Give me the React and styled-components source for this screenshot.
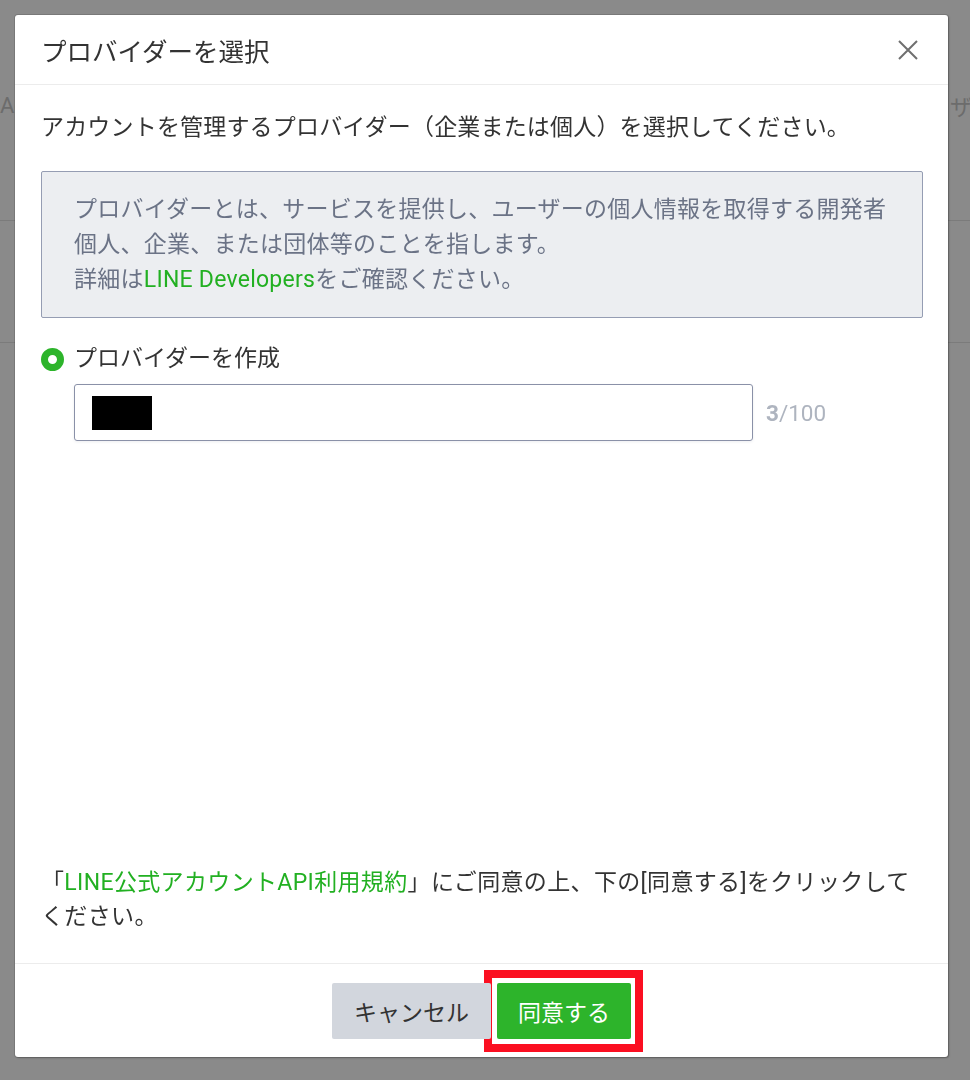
import React from "react"
import styled, { createGlobalStyle } from "styled-components"

const GlobalStyle = createGlobalStyle`
  html, body {
    margin: 0;
    padding: 0;
    background: #8a8a8a;
  }
  body {
    font-family: "Roboto", "Noto Sans CJK JP", sans-serif;
    -webkit-font-smoothing: antialiased;
  }
`

// faint page behind the dim layer
const BackPage = styled.div`
  width: 970px;
  height: 1080px;
  overflow: hidden;
  background: #8a8a8a;
`

const BackRow = styled.div`
  display: grid;
  grid-template-columns: 950px 1fr;
  align-items: center;
  height: ${p => p.$h}px;
  border-bottom: 1px solid #7b7b7b;
  color: #6c6c6c;
  font-size: 22px;
  white-space: nowrap;
  padding-bottom: ${p => p.$pb || 0}px;
  box-sizing: border-box;
`

const Overlay = styled.div`
  position: fixed;
  inset: 0;
  display: flex;
  align-items: flex-start;
  padding: 15px 0 0 15px;
`

const Modal = styled.div`
  width: 933px;
  height: 1042px;
  background: #fff;
  border-radius: 3px;
  box-shadow: 0 0 0 1px rgba(0, 0, 0, 0.12), 1px 1px 2px rgba(0, 0, 0, 0.25);
  display: flex;
  flex-direction: column;
`

const Header = styled.div`
  height: 69px;
  display: flex;
  align-items: center;
  justify-content: space-between;
  padding: 0 28px 0 26px;
  border-bottom: 1px solid #ececec;
`

const Title = styled.h2`
  margin: 0;
  font-size: 25.5px;
  font-weight: 400;
  color: #333;
`

const CloseButton = styled.button`
  border: 0;
  background: none;
  padding: 0;
  width: 24px;
  height: 24px;
  display: flex;
  align-items: center;
  justify-content: center;
  cursor: pointer;
`

const Body = styled.div`
  flex: 1;
  display: flex;
  flex-direction: column;
  padding: 26px 25px 29px 26px;
`

const Lead = styled.p`
  margin: 0 0 26px;
  font-size: 23px;
  line-height: 34px;
  letter-spacing: 0.18px;
  color: #333;
`

const InfoBox = styled.div`
  background: #eceef1;
  border: 1px solid #959db3;
  border-radius: 2px;
  padding: 20px 32px;
  font-size: 23px;
  line-height: 35px;
  letter-spacing: 0.25px;
  color: #6b7386;
`

const Link = styled.a`
  color: #22b022;
  text-decoration: none;
`

const RadioRow = styled.label`
  display: flex;
  align-items: center;
  gap: 10px;
  margin-top: 24px;
  font-size: 23px;
  line-height: 34px;
  color: #333;
`

const Radio = styled.span`
  width: 23px;
  height: 23px;
  border-radius: 50%;
  box-sizing: border-box;
  border: 7px solid #2db42b;
  background: #fff;
  flex: none;
`

const InputRow = styled.div`
  display: flex;
  align-items: center;
  gap: 13px;
  margin: 8px 0 0 33px;
`

const InputBox = styled.div`
  width: 679px;
  height: 57px;
  box-sizing: border-box;
  border: 1px solid #8a91a8;
  border-radius: 3px;
  box-shadow: 0 1px 3px rgba(30, 40, 70, 0.08);
  display: flex;
  align-items: center;
  padding-left: 17px;
`

const Redacted = styled.span`
  width: 60px;
  height: 34px;
  background: #000;
`

const Counter = styled.span`
  font-size: 22.5px;
  color: #aeb4bf;
  b {
    font-weight: 700;
  }
`

const Terms = styled.p`
  margin: auto 0 0;
  font-size: 23px;
  line-height: 34px;
  letter-spacing: 0.35px;
  color: #333;
`

const Footer = styled.div`
  border-top: 1px solid #ececec;
  height: 93px;
  display: flex;
  align-items: center;
  justify-content: center;
  gap: 6px;
`

const Button = styled.button`
  height: 56px;
  border: 0;
  border-radius: 2px;
  padding: 0 ${p => (p.$primary ? 21 : 22)}px;
  font-family: inherit;
  font-size: 23px;
  color: ${p => (p.$primary ? "#fff" : "#333")};
  background: ${p => (p.$primary ? "#2db42b" : "#d2d6dd")};
  position: relative;
  z-index: 1;
  cursor: pointer;
`

// red annotation frame around the agree button
const Marked = styled.span`
  position: relative;
  display: inline-flex;
  &::before {
    content: "";
    position: absolute;
    top: -13px;
    bottom: -13px;
    left: -13px;
    right: -12px;
    background: #fff;
    border: 8px solid #fb0f21;
  }
`

export default function App() {
  return (
    <>
      <GlobalStyle />
      <BackPage>
        <BackRow $h={221} $pb={10}>
          <span>Account</span>
          <span>ザー</span>
        </BackRow>
        <BackRow $h={122} />
      </BackPage>
      <Overlay>
        <Modal>
          <Header>
            <Title>プロバイダーを選択</Title>
            <CloseButton aria-label="close">
              <svg width="22" height="22" viewBox="0 0 22 22">
                <path d="M2 2 L20 20 M20 2 L2 20" stroke="#6f6f6f" strokeWidth="2" fill="none" />
              </svg>
            </CloseButton>
          </Header>
          <Body>
            <Lead>アカウントを管理するプロバイダー（企業または個人）を選択してください。</Lead>
            <InfoBox>
              プロバイダーとは、サービスを提供し、ユーザーの個人情報を取得する開発者
              <br />
              個人、企業、または団体等のことを指します。
              <br />
              詳細は<Link href="#">LINE Developers</Link>をご確認ください。
            </InfoBox>
            <RadioRow>
              <Radio />
              プロバイダーを作成
            </RadioRow>
            <InputRow>
              <InputBox>
                <Redacted />
              </InputBox>
              <Counter>
                <b>3</b>/100
              </Counter>
            </InputRow>
            <Terms>
              「<Link href="#">LINE公式アカウントAPI利用規約</Link>」にご同意の上、下の[同意する]をクリックしてください。
            </Terms>
          </Body>
          <Footer>
            <Button>キャンセル</Button>
            <Marked>
              <Button $primary>同意する</Button>
            </Marked>
          </Footer>
        </Modal>
      </Overlay>
    </>
  )
}
